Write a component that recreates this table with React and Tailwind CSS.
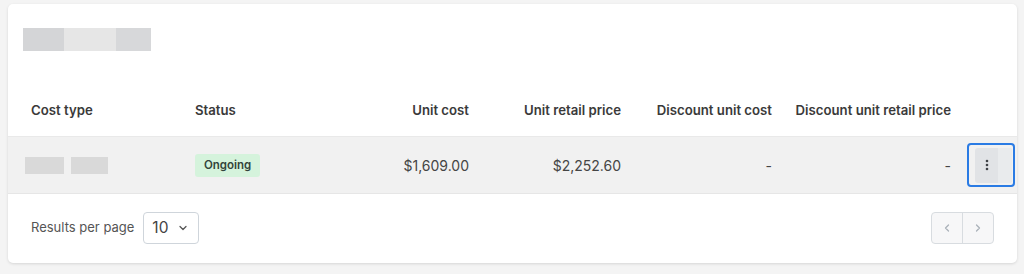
import { ChevronDown, ChevronLeft, ChevronRight } from 'lucide-react'

const cols = [
  { key: 'type', label: 'Cost type', w: 'w-[179px]', align: 'pl-[23px] text-left' },
  { key: 'status', label: 'Status', w: 'w-[143px]', align: 'pl-[8px] text-left' },
  { key: 'unit', label: 'Unit cost', w: 'w-[155px]', align: 'pr-[16px] text-right' },
  { key: 'retail', label: 'Unit retail price', w: 'w-[152px]', align: 'pr-[16px] text-right' },
  { key: 'dunit', label: 'Discount unit cost', w: 'w-[151px]', align: 'pr-[16px] text-right' },
  { key: 'dretail', label: 'Discount unit retail price', w: 'w-[179px]', align: 'pr-[16px] text-right' },
]

function KebabButton() {
  return (
    <div className="w-[48px] h-[44px] rounded-[4px] border-2 border-[#2a7be4] flex items-center justify-end pr-[1px]">
      <div className="w-[37px] h-[35px] rounded-[3px] bg-[#e1e3e6] flex">
        <div className="w-[23px] flex items-center justify-center">
          <svg width="4" height="12" viewBox="0 0 4 12" fill="#3f4246">
            <circle cx="2" cy="2" r="1.3" />
            <circle cx="2" cy="6" r="1.3" />
            <circle cx="2" cy="10" r="1.3" />
          </svg>
        </div>
        <div className="flex-1 bg-[#e9ebed] rounded-r-[3px]" />
      </div>
    </div>
  )
}

export default function App() {
  return (
    <div className="w-[1024px] h-[274px] bg-[#f4f4f4] pt-[4px] pl-[8px] font-['Inter',sans-serif]">
      <div className="w-[1009px] h-[259px] bg-white rounded-[5px] shadow-[0_1px_3px_rgba(0,0,0,0.12)] flex flex-col">
        <div className="pt-[24px] pl-[15px] flex">
          <div className="w-[41px] h-[23px] bg-[#d4d5d7]" />
          <div className="w-[52px] h-[23px] bg-[#e6e6e6]" />
          <div className="w-[35px] h-[23px] bg-[#d7d8da]" />
        </div>

        <div className="flex h-[86px] items-end pb-[16px] border-b border-[#e9e9e9]">
          {cols.map((c) => (
            <div key={c.key} className={`${c.w} ${c.align} text-[13.2px] leading-[20px] font-semibold text-[#3a3a3a]`}>
              {c.label}
            </div>
          ))}
        </div>

        <div className="flex h-[57px] items-center bg-[#f1f1f1] border-b border-[#e6e6e6] text-[14px] text-[#454545]">
          <div className="w-[179px] pl-[17px] flex gap-[7px]">
            <div className="w-[39px] h-[17px] bg-[#d9d9d9]" />
            <div className="w-[37px] h-[17px] bg-[#d9d9d9]" />
          </div>
          <div className="w-[143px] pl-[8px]">
            <span className="inline-flex items-center h-[23px] px-[9px] rounded-[3px] bg-[#d5f3dc] text-[11.5px] font-semibold text-[#33443a]">
              Ongoing
            </span>
          </div>
          <div className="w-[155px] pr-[16px] text-right">$1,609.00</div>
          <div className="w-[152px] pr-[16px] text-right">$2,252.60</div>
          <div className="w-[151px] pr-[16px] text-right">-</div>
          <div className="w-[179px] pr-[16px] text-right">-</div>
          <div className="w-[50px] flex">
            <KebabButton />
          </div>
        </div>

        <div className="flex-1 flex items-center justify-between pl-[23px] pr-[23px] pb-[2px]">
          <div className="flex items-center gap-[9px]">
            <span className="text-[13px] text-[#555]">Results per page</span>
            <div className="w-[56px] h-[32px] border border-[#cfd5db] rounded-[4px] flex items-center pl-[8px] gap-[9px]">
              <span className="text-[15.5px] text-[#444]">10</span>
              <ChevronDown size={12} strokeWidth={2.5} className="text-[#555]" />
            </div>
          </div>
          <div className="flex h-[32px] border border-[#d8dce0] rounded-[4px] bg-[#f7f7f8]">
            <div className="w-[31px] flex items-center justify-center border-r border-[#d8dce0]">
              <ChevronLeft size={12} strokeWidth={2.5} className="text-[#aab1b9]" />
            </div>
            <div className="w-[30px] flex items-center justify-center">
              <ChevronRight size={12} strokeWidth={2.5} className="text-[#aab1b9]" />
            </div>
          </div>
        </div>
      </div>
    </div>
  )
}
